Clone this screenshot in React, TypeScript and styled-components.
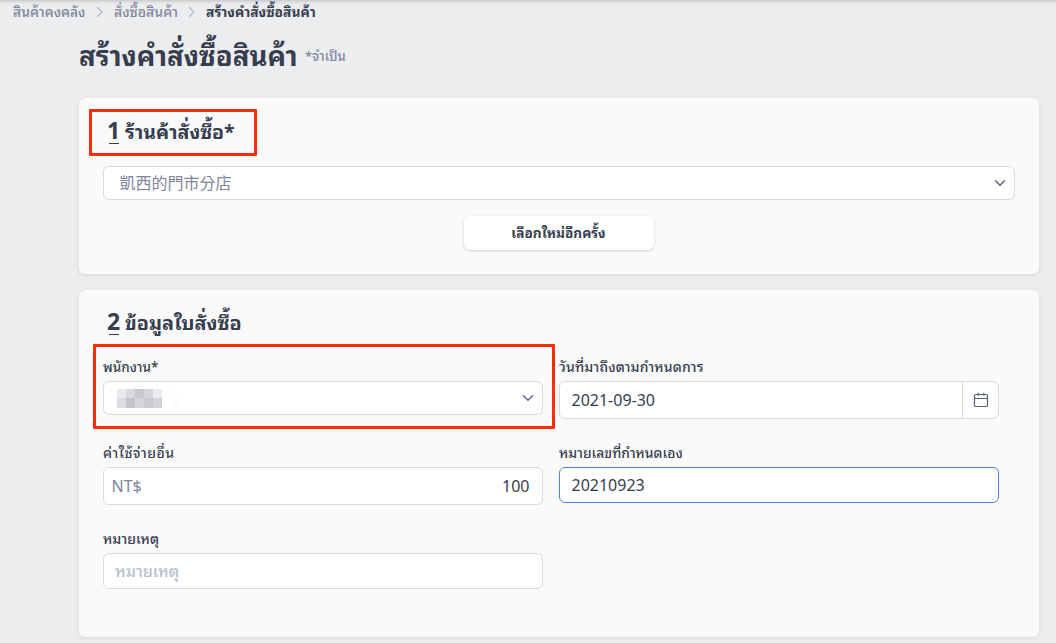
import React from "react";
import styled, { createGlobalStyle } from "styled-components";

const Global = createGlobalStyle`
  * { box-sizing: border-box; }
  body {
    margin: 0;
    height: 643px;
    overflow: hidden;
    background: #ecedef;
    color: #363d4f;
    font-family: "Noto Sans", "Noto Sans Thai Looped", "Noto Sans CJK TC", sans-serif;
  }
`;

const Page = styled.main`
  height: 643px;
  overflow: hidden;
  background: linear-gradient(#c9cacc, #dfe0e2 2px, #ecedef 5px);
`;

const Fit = styled.span<{ $size: number; $track?: number; $weight?: number }>`
  display: inline-block;
  white-space: nowrap;
  font-size: ${(p) => p.$size}px;
  letter-spacing: ${(p) => p.$track ?? 0}px;
  font-weight: ${(p) => p.$weight ?? 500};
`;

const Breadcrumb = styled.nav`
  display: flex;
  align-items: center;
  height: 24px;
  padding: 0 0 2px 13px;
  line-height: 20px;
  color: #7d859c;
`;

const Crumb = styled.span<{ $width: number; $current?: boolean }>`
  width: ${(p) => p.$width}px;
  color: ${(p) => (p.$current ? "#363d4f" : "#7d859c")};
`;

const Separator = styled.svg`
  width: 28px;
  height: 12px;
  margin-top: 2px;
  flex: none;
`;

const Header = styled.header`
  display: flex;
  align-items: center;
  height: 74px;
  padding: 0 0 13px 79px;
`;

const Title = styled.h1`
  margin: 0;
  width: 226px;
  line-height: 40px;
`;

const Required = styled.span`
  color: #7d859c;
`;

const Card = styled.section<{ $height: number }>`
  position: relative;
  width: 960px;
  height: ${(p) => p.$height}px;
  margin: 0 0 16px 79px;
  padding: 16px 24px 0;
  border-radius: 6px;
  background: #fafafa;
  box-shadow: 0 1px 4px rgba(50, 60, 80, 0.13);
`;

const SectionTitle = styled.h2<{ $lift: number }>`
  display: flex;
  align-items: center;
  height: 36px;
  margin: 0;
  padding: 0 0 ${(p) => p.$lift}px 4px;

  ${Fit} {
    padding-bottom: 2px;
  }
`;

const Step = styled.span`
  width: 18px;
  height: 27px;
  display: flex;
  flex-direction: column;
  font: 700 23px/24px "Noto Sans", sans-serif;

  &::after {
    content: "";
    width: 10px;
    height: 1px;
    margin: 1px 0 0 2px;
    flex: none;
    background: #363d4f;
  }
`;

const Control = styled.div<{ $height: number; $focused?: boolean }>`
  display: flex;
  align-items: center;
  height: ${(p) => p.$height}px;
  border: 1px solid ${(p) => (p.$focused ? "#4c82e0" : "#d3dde6")};
  border-radius: 6px;
  background: #fff;
  font-size: 16px;
`;

const StoreSelect = styled(Control)`
  width: 912px;
  margin-top: 16px;
  padding: 0 8px 0 15px;
  justify-content: space-between;
  color: #7d859c;
`;

const StoreName = styled.span`
  padding: 0 0 2px 0.5px;
`;

const StaffSelect = styled(Control)`
  padding: 0 8px 0 13px;
  justify-content: space-between;
`;

const ResetButton = styled.button`
  display: flex;
  align-items: center;
  justify-content: center;
  width: 190px;
  height: 34px;
  margin: 16px 0 0 360.5px;
  padding: 0 0 3px;
  border: 0;
  border-radius: 6px;
  background: #fff;
  color: #363d4f;
  font-family: inherit;
  box-shadow: 0 1px 3px rgba(40, 50, 70, 0.2);
`;

const Fields = styled.div`
  display: grid;
  grid-template-columns: 440px 440px;
  grid-auto-rows: 86px;
  column-gap: 16px;
  margin-top: 3px;
`;

const Label = styled.label`
  display: flex;
  align-items: center;
  height: 36px;
  padding-top: 5px;
`;

const Value = styled.span`
  flex: 1;
  padding-left: 11.5px;
`;

const Currency = styled.span`
  flex: 1;
  padding-left: 7.5px;
  color: #7d859c;
`;

const Amount = styled.span`
  padding-right: 12.5px;
`;

const Placeholder = styled.span`
  padding: 0 0 2px 11px;
  color: #b6bccd;
`;

const CalendarButton = styled.span`
  display: flex;
  align-items: center;
  justify-content: center;
  width: 36px;
  height: 100%;
  border-left: 1px solid #d3dde6;
`;

const Mosaic = styled.span`
  display: grid;
  grid-template-columns: repeat(7, 9px);
  grid-template-rows: 9px 10px;
`;

const Tile = styled.i<{ $tone: string }>`
  background: ${(p) => p.$tone};
`;

const Highlight = styled.div<{ $x: number; $y: number; $w: number; $h: number }>`
  position: absolute;
  left: ${(p) => p.$x}px;
  top: ${(p) => p.$y}px;
  width: ${(p) => p.$w}px;
  height: ${(p) => p.$h}px;
  border: 3px solid #ff2a06;
  border-radius: 1px;
  pointer-events: none;
`;

const Arrow = () => (
  <Separator viewBox="0 0 28 12" fill="none" stroke="#b6bccd" strokeWidth="1.3">
    <path d="M11 1.3 16 6l-5 4.7" />
  </Separator>
);

const Chevron = () => (
  <svg width="12" height="12" viewBox="0 0 12 12" fill="none" stroke="#59617d" strokeWidth="1.4" strokeLinecap="round" strokeLinejoin="round">
    <path d="m1.5 3.7 4.5 4.5 4.5-4.5" />
  </svg>
);

const Calendar = () => (
  <svg width="16" height="16" viewBox="0 0 16 16" fill="none" stroke="#59617d" strokeWidth="1.2">
    <rect x="1.5" y="2.5" width="13" height="12" rx="1.3" />
    <path d="M1.5 6.5h13M5.2 .7v3M10.8 .7v3" />
  </svg>
);

const tones = [
  "#e9e9eb", "#dadade", "#c9c9ce", "#d4d4d9", "#ebebee", "#fdfdfd", "#ffffff",
  "#dedee1", "#c3c3c8", "#d4d4d9", "#cacad0", "#d2d2d8", "#ffffff", "#fcfcfc",
];

export default function App() {
  return (
    <Page>
      <Global />
      <Breadcrumb>
        <Crumb $width={73}><Fit $size={13.9}>สินค้าคงคลัง</Fit></Crumb>
        <Arrow />
        <Crumb $width={64}><Fit $size={14}>สั่งซื้อสินค้า</Fit></Crumb>
        <Arrow />
        <Crumb $width={110} $current><Fit $size={13.8} $weight={700}>สร้างคำสั่งซื้อสินค้า</Fit></Crumb>
      </Breadcrumb>
      <Header>
        <Title><Fit $size={27.5} $weight={700}>สร้างคำสั่งซื้อสินค้า</Fit></Title>
        <Required><Fit $size={13}>*จำเป็น</Fit></Required>
      </Header>
      <Card $height={176}>
        <SectionTitle $lift={2}><Step>1</Step><Fit $size={19.5} $weight={700}>ร้านค้าสั่งซื้อ*</Fit></SectionTitle>
        <StoreSelect $height={34}><StoreName>凱西的門市分店</StoreName><Chevron /></StoreSelect>
        <ResetButton><Fit $size={13.6} $weight={700}>เลือกใหม่อีกครั้ง</Fit></ResetButton>
        <Highlight $x={10} $y={11} $w={168} $h={47} />
      </Card>
      <Card $height={347}>
        <SectionTitle $lift={4}><Step>2</Step><Fit $size={19.8} $weight={700}>ข้อมูลใบสั่งซื้อ</Fit></SectionTitle>
        <Fields>
          <div>
            <Label><Fit $size={13.5}>พนักงาน*</Fit></Label>
            <StaffSelect $height={34}>
              <Mosaic>{tones.map((t, i) => <Tile key={i} $tone={t} />)}</Mosaic>
              <Chevron />
            </StaffSelect>
          </div>
          <div>
            <Label><Fit $size={14} $track={0.1}>วันที่มาถึงตามกำหนดการ</Fit></Label>
            <Control $height={38}><Value>2021-09-30</Value><CalendarButton><Calendar /></CalendarButton></Control>
          </div>
          <div>
            <Label><Fit $size={14} $track={0.45}>ค่าใช้จ่ายอื่น</Fit></Label>
            <Control $height={38}><Currency>NT$</Currency><Amount>100</Amount></Control>
          </div>
          <div>
            <Label><Fit $size={13.8}>หมายเลขที่กำหนดเอง</Fit></Label>
            <Control $height={36} $focused><Value>20210923</Value></Control>
          </div>
          <div>
            <Label><Fit $size={14}>หมายเหตุ</Fit></Label>
            <Control $height={36}><Placeholder><Fit $size={16}>หมายเหตุ</Fit></Placeholder></Control>
          </div>
        </Fields>
        <Highlight $x={14} $y={54} $w={462} $h={85} />
      </Card>
    </Page>
  );
}
